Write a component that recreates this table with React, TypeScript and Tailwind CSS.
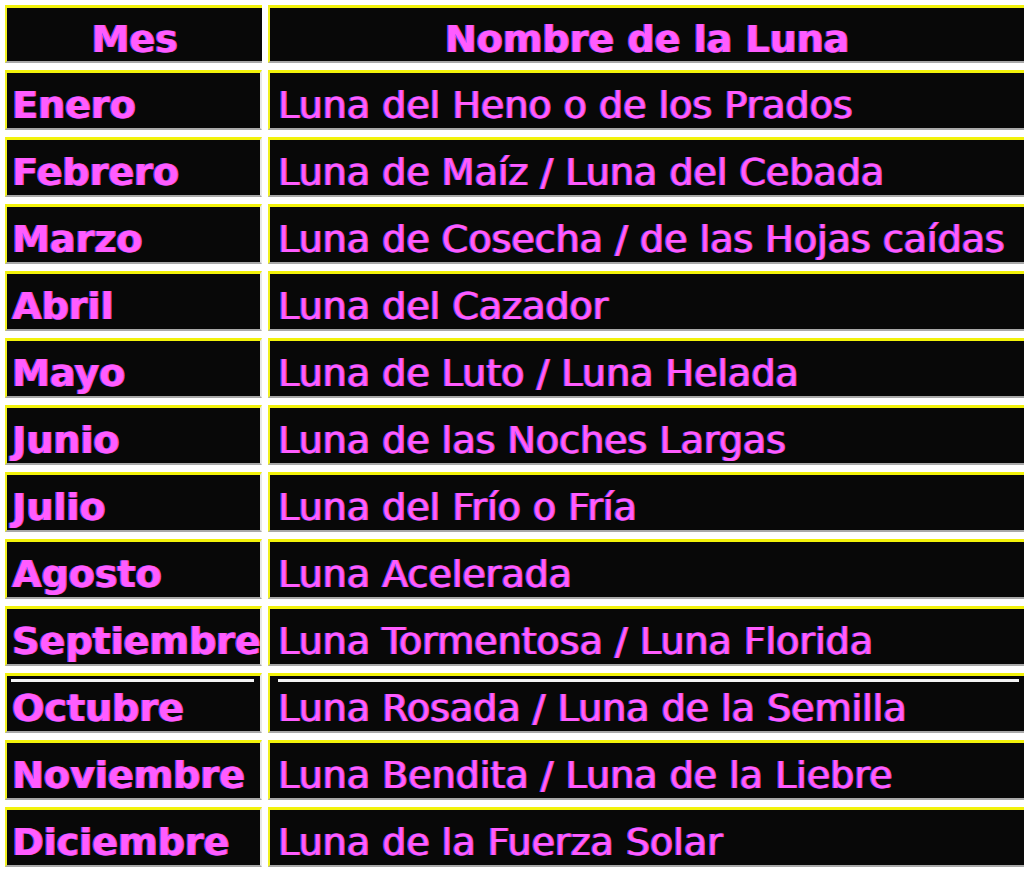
import React from 'react';

const rows: [string, string][] = [
  ['Enero', 'Luna del Heno o de los Prados'],
  ['Febrero', 'Luna de Maíz / Luna del Cebada'],
  ['Marzo', 'Luna de Cosecha / de las Hojas caídas'],
  ['Abril', 'Luna del Cazador'],
  ['Mayo', 'Luna de Luto / Luna Helada'],
  ['Junio', 'Luna de las Noches Largas'],
  ['Julio', 'Luna del Frío o Fría'],
  ['Agosto', 'Luna Acelerada'],
  ['Septiembre', 'Luna Tormentosa / Luna Florida'],
  ['Octubre', 'Luna Rosada / Luna de la Semilla'],
  ['Noviembre', 'Luna Bendita / Luna de la Liebre'],
  ['Diciembre', 'Luna de la Fuerza Solar'],
];

const cell =
  'relative box-border flex items-center bg-[#080808] border-t-[3px] border-l-2 border-b-2 border-t-[#f2f20a] border-l-[#f0f020] border-b-[#a8a8a8] pt-[10px]';
const text =
  'text-[#ff5cff] text-[38px] leading-[45px] whitespace-nowrap [text-shadow:-1px_0_0_#5a4cff,1px_0_0_#ff4a9a]';

const App = () => {
  return (
    <div
      className="w-[1024px] h-[874px] overflow-hidden bg-white pt-[5px] pl-[5px] flex flex-col gap-[7px]"
      style={{ fontFamily: '"DejaVu Sans", Verdana, sans-serif' }}
    >
      <div className="flex gap-[6px] h-[58px] shrink-0">
        <div className={`${cell} w-[257px] justify-center`}>
          <span className={`${text} font-bold`}>Mes</span>
        </div>
        <div className={`${cell} flex-1 justify-center`}>
          <span className={`${text} font-bold`}>Nombre de la Luna</span>
        </div>
      </div>

      {rows.map(([mes, nombre]) => (
        <div key={mes} className="flex gap-[6px] h-[60px] shrink-0">
          <div className={`${cell} w-[257px] pl-[5px] border-r-2 border-r-[#e8e8e8]`}>
            {mes === 'Octubre' && (
              <div className="absolute left-[4px] right-[6px] top-[3px] h-[3px] bg-[#f4f4f4]" />
            )}
            <span className={`${text} font-bold`}>{mes}</span>
          </div>
          <div className={`${cell} flex-1 pl-[8px]`}>
            {mes === 'Octubre' && (
              <div className="absolute left-[8px] right-[5px] top-[3px] h-[3px] bg-[#f4f4f4]" />
            )}
            <span className={text}>{nombre}</span>
          </div>
        </div>
      ))}
    </div>
  );
};

export default App;
